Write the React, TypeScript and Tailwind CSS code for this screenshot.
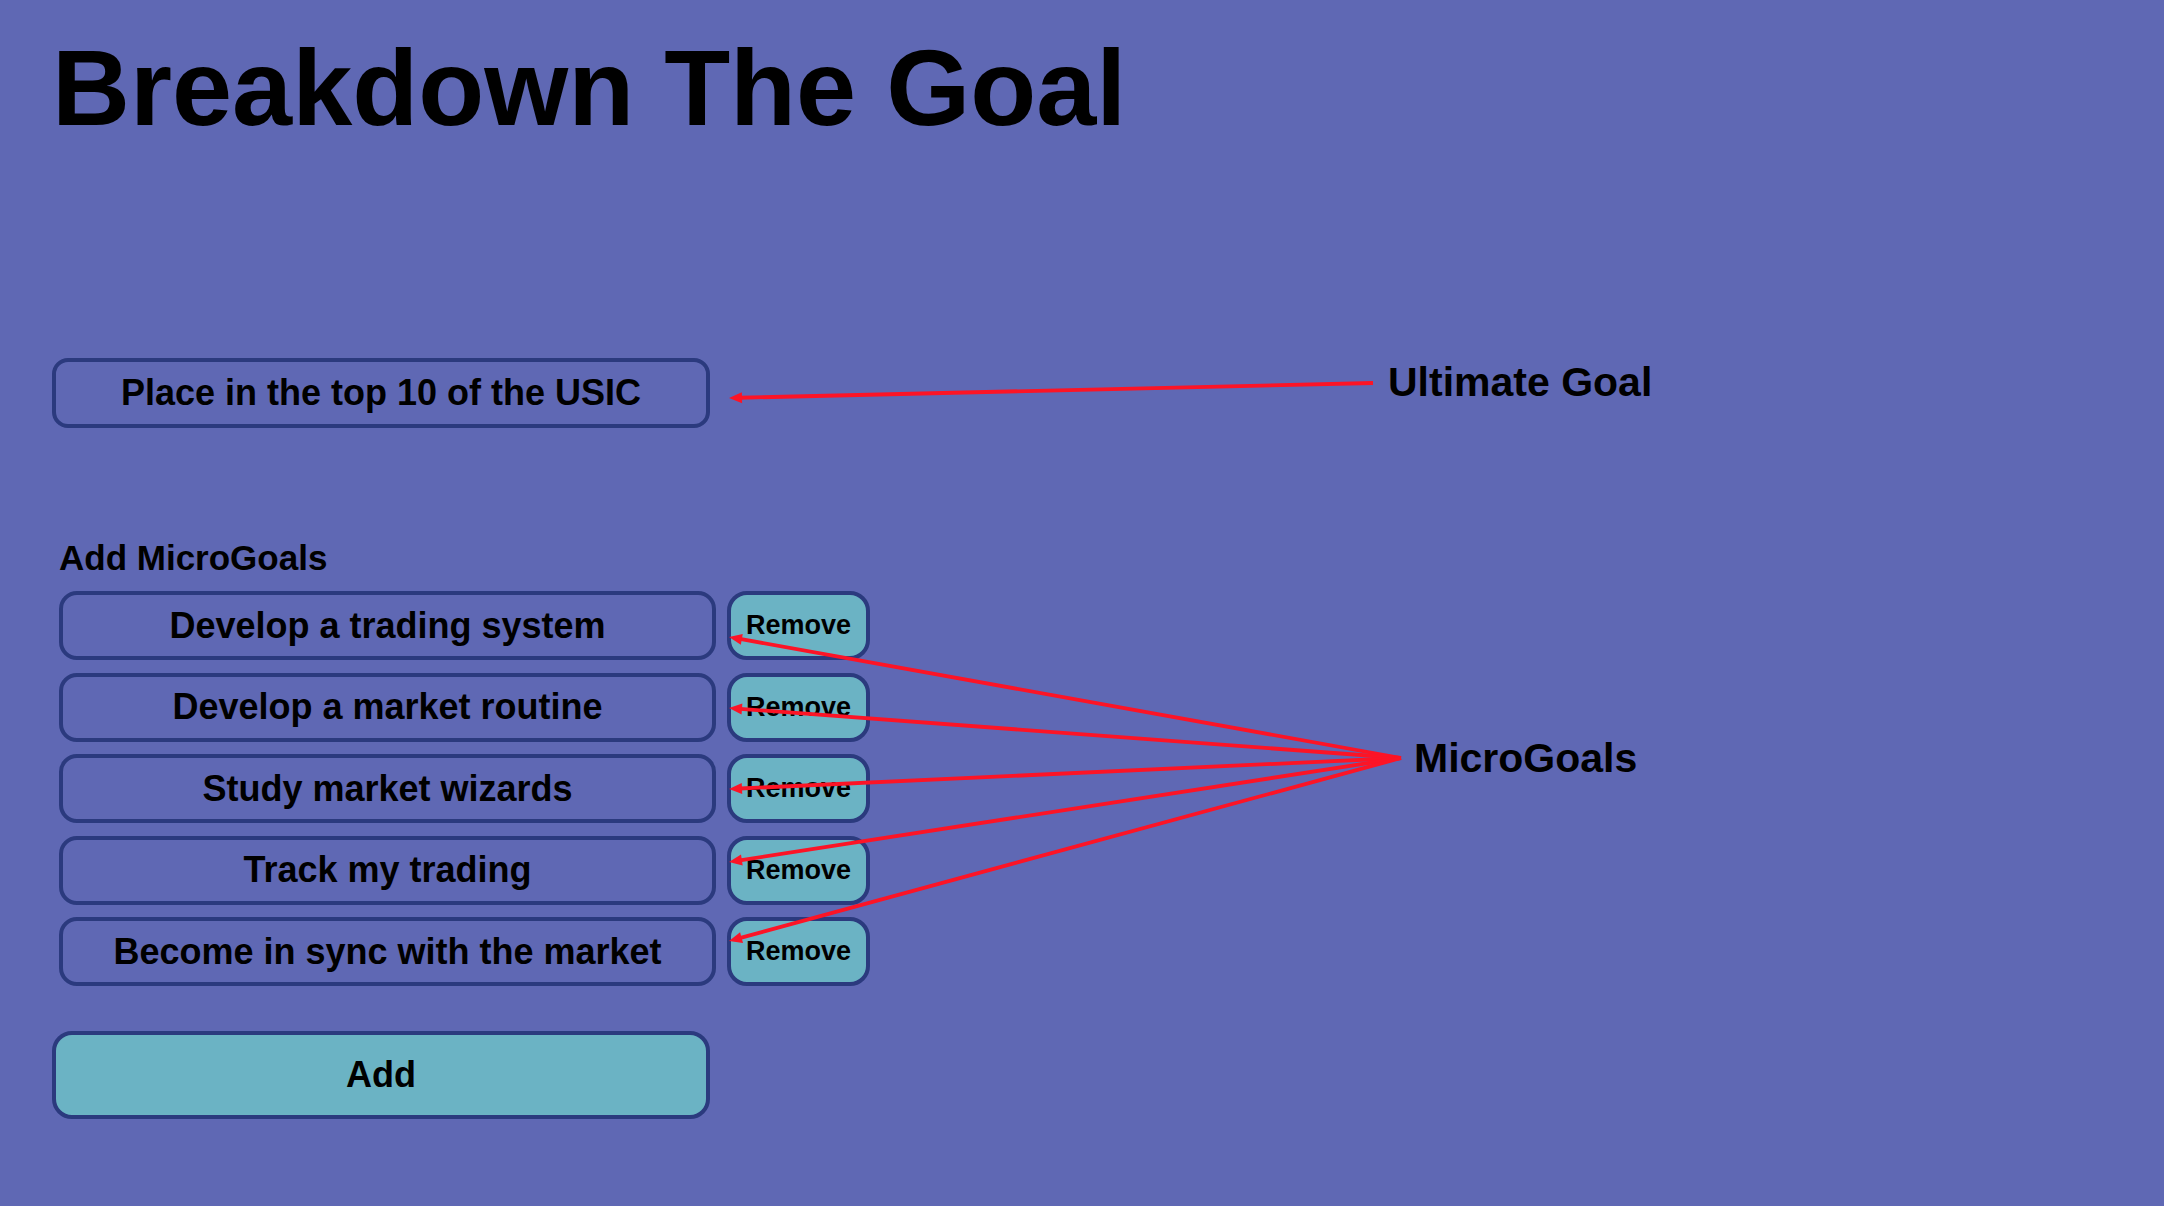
import React from "react";

const goals = [
  "Develop a trading system",
  "Develop a market routine",
  "Study market wizards",
  "Track my trading",
  "Become in sync with the market",
];

type Arrow = { x1: number; y1: number; x2: number; y2: number };

const arrows: Arrow[] = [
  { x1: 1373, y1: 383, x2: 729, y2: 398 },
  { x1: 1401, y1: 758, x2: 729, y2: 637 },
  { x1: 1401, y1: 758, x2: 729, y2: 708 },
  { x1: 1401, y1: 758, x2: 729, y2: 789 },
  { x1: 1401, y1: 758, x2: 729, y2: 862 },
  { x1: 1401, y1: 758, x2: 729, y2: 941 },
];

function ArrowShape({ a }: { a: Arrow }) {
  const dx = a.x2 - a.x1;
  const dy = a.y2 - a.y1;
  const len = Math.hypot(dx, dy);
  const ux = dx / len;
  const uy = dy / len;
  const hl = 13;
  const hw = 5.5;
  const bx = a.x2 - ux * hl;
  const by = a.y2 - uy * hl;
  const px = -uy;
  const py = ux;
  const pts = `${a.x2},${a.y2} ${bx + px * hw},${by + py * hw} ${bx - px * hw},${by - py * hw}`;
  return (
    <g>
      <line x1={a.x1} y1={a.y1} x2={bx + ux * 2} y2={by + uy * 2} stroke="#fc1426" strokeWidth={3.8} />
      <polygon points={pts} fill="#fc1426" />
    </g>
  );
}

export default function App() {
  return (
    <div className="relative w-[2164px] h-[1206px] overflow-hidden bg-[#5f68b4] font-['Liberation_Sans',Arial,sans-serif] text-black">
      <div className="flex flex-col pl-[52px] pt-[34px]">
        <h1 className="text-[108px] font-bold leading-none">Breakdown The Goal</h1>

        <div className="mt-[216px] w-[658px] h-[70px] rounded-[16px] border-4 border-[#2b3a7e] flex items-center justify-center text-[36px] font-bold leading-none">
          Place in the top 10 of the USIC
        </div>

        <div className="mt-[112px] ml-[7px] flex flex-col">
          <div className="text-[35px] font-bold leading-none">Add MicroGoals</div>
          <div className="mt-[16px] flex flex-col gap-[12.5px]">
            {goals.map((g) => (
              <div key={g} className="flex gap-[11px]">
                <div className="w-[657px] h-[69px] rounded-[18px] border-4 border-[#2b3a7e] flex items-center justify-center text-[36px] font-bold leading-none">
                  {g}
                </div>
                <div className="w-[143px] h-[69px] rounded-[20px] border-4 border-[#2b3a7e] bg-[#6bb3c4] flex items-center justify-center text-[27px] font-bold leading-none">
                  Remove
                </div>
              </div>
            ))}
          </div>
        </div>

        <div className="mt-[45px] w-[658px] h-[88px] rounded-[20px] border-4 border-[#2b3a7e] bg-[#6bb3c4] flex items-center justify-center text-[36px] font-bold leading-none">
          Add
        </div>
      </div>

      <svg className="absolute inset-0 pointer-events-none" width={2164} height={1206} viewBox="0 0 2164 1206">
        {arrows.map((a, i) => (
          <ArrowShape key={i} a={a} />
        ))}
      </svg>

      <div className="absolute left-[1388px] top-[362px] text-[41px] font-bold leading-none">Ultimate Goal</div>
      <div className="absolute left-[1414px] top-[738px] text-[41px] font-bold leading-none">MicroGoals</div>
    </div>
  );
}
